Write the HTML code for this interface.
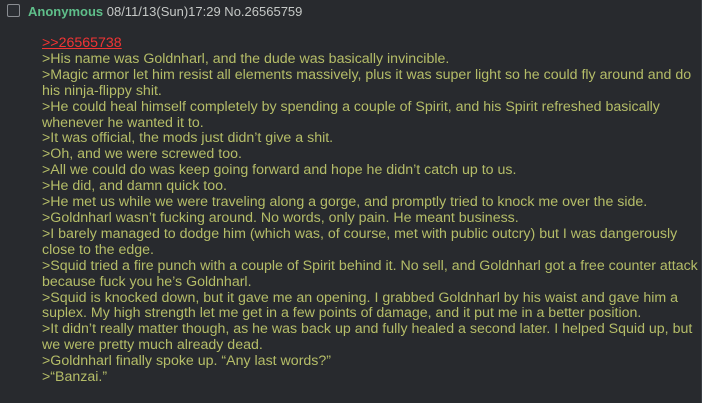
<html><head><style>
body{margin:0;background:#282a2e;width:702px;height:403px;overflow:hidden;font-family:"Liberation Sans",Arial,sans-serif;font-size:13px;color:#c5c8c6}
.post{position:absolute;left:0;top:0;width:701px;height:403px;background:#282a2e;border-right:1px solid #3a3f44}
.hdr{position:absolute;left:7px;top:4px;line-height:16px;white-space:nowrap;font-size:13px}
.cb{display:inline-block;width:11px;height:11px;border:1px solid #8a8d92;border-radius:2px;background:#2b2e33;vertical-align:-1px;margin-right:8px}
.name{color:#5fbf8a;font-weight:bold}
.bq{position:absolute;left:42px;top:36px;font-size:14.2px;line-height:15.9px;color:#b5bd68;white-space:nowrap}
.ql{color:#f03434;text-decoration:underline}
</style></head><body><div class="post">
<div class="hdr"><span class="cb"></span><span class="name">Anonymous</span> 08/11/13(Sun)17:29 No.26565759</div>
<div class="bq"><span class="ql">&gt;&gt;26565738</span><br>
&gt;His name was Goldnharl, and the dude was basically invincible.<br>
&gt;Magic armor let him resist all elements massively, plus it was super light so he could fly around and do<br>his ninja-flippy shit.<br>
&gt;He could heal himself completely by spending a couple of Spirit, and his Spirit refreshed basically<br>whenever he wanted it to.<br>
&gt;It was official, the mods just didn’t give a shit.<br>
&gt;Oh, and we were screwed too.<br>
&gt;All we could do was keep going forward and hope he didn’t catch up to us.<br>
&gt;He did, and damn quick too.<br>
&gt;He met us while we were traveling along a gorge, and promptly tried to knock me over the side.<br>
&gt;Goldnharl wasn’t fucking around. No words, only pain. He meant business.<br>
&gt;I barely managed to dodge him (which was, of course, met with public outcry) but I was dangerously<br>close to the edge.<br>
&gt;Squid tried a fire punch with a couple of Spirit behind it. No sell, and Goldnharl got a free counter attack<br>because fuck you he’s Goldnharl.<br>
&gt;Squid is knocked down, but it gave me an opening. I grabbed Goldnharl by his waist and gave him a<br>suplex. My high strength let me get in a few points of damage, and it put me in a better position.<br>
&gt;It didn’t really matter though, as he was back up and fully healed a second later. I helped Squid up, but<br>we were pretty much already dead.<br>
&gt;Goldnharl finally spoke up. “Any last words?”<br>
&gt;“Banzai.”</div>
</div></body></html>
